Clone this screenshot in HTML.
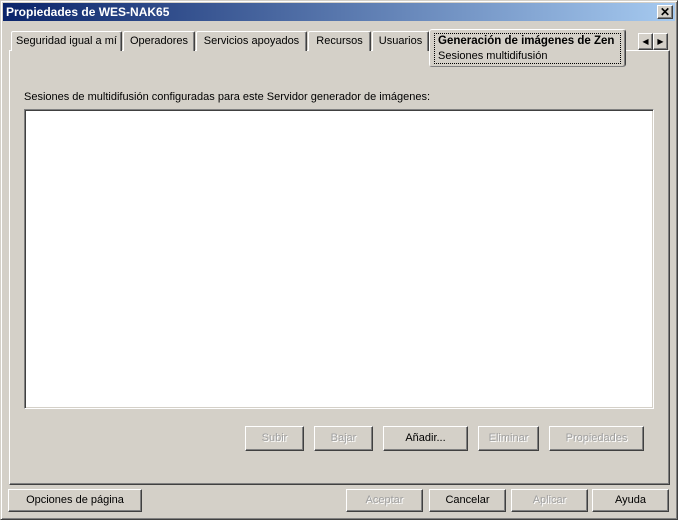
<!DOCTYPE html>
<html><head><meta charset="utf-8"><style>
*{margin:0;padding:0;box-sizing:border-box}
body{width:678px;height:520px;background:#d4d0c8;font-family:"Liberation Sans",sans-serif;font-size:11px;color:#000;position:relative;overflow:hidden}
.a{position:absolute}
.win{left:0;top:0;width:678px;height:520px;border:1px solid;border-color:#d4d0c8 #404040 #404040 #d4d0c8;box-shadow:inset 1px 1px #fff,inset -1px -1px #808080}
.title{left:3px;top:3px;width:672px;height:18px;background:linear-gradient(90deg,#0a246a,#a6caf0);color:#fff;font-weight:bold;font-size:12px;line-height:18px;padding-left:3px}
.btn{position:absolute;background:#d4d0c8;border:1px solid;border-color:#fff #404040 #404040 #fff;box-shadow:inset -1px -1px #808080;text-align:center;line-height:20px}
.dis{color:#a0a0a0;text-shadow:1px 1px #fff}
.tab{position:absolute;top:31px;height:20px;border:1px solid;border-bottom:none;border-color:#fff #404040 #404040 #fff;box-shadow:inset -1px 0 #808080;border-radius:2px 2px 0 0;line-height:18px;text-align:center;background:#d4d0c8}
</style></head><body>
<div class="a win"></div>
<div class="a title">Propiedades de WES-NAK65</div>
<div class="btn" style="left:657px;top:5px;width:16px;height:14px;line-height:12px;font-weight:bold;font-size:12px">✕</div>
<div class="a" style="left:9px;top:50px;width:661px;height:435px;border:1px solid;border-color:#fff #404040 #404040 #fff;box-shadow:inset -1px -1px #808080"></div>
<div class="tab" style="left:11px;width:111px">Seguridad igual a mí</div>
<div class="tab" style="left:123px;width:72px">Operadores</div>
<div class="tab" style="left:196px;width:111px">Servicios apoyados</div>
<div class="tab" style="left:308px;width:63px">Recursos</div>
<div class="tab" style="left:372px;width:57px">Usuarios</div>
<div class="tab" style="left:429px;top:29px;width:197px;height:38px;border-bottom:1px solid #808080;border-radius:3px;text-align:left">
<div class="a" style="left:4px;top:3px;width:187px;height:31px;border:1px dotted #000"></div>
<div class="a" style="left:8px;top:2px;font-weight:bold;font-size:11.5px;white-space:nowrap">Generación de imágenes de Zen</div>
<div class="a" style="left:8px;top:17px">Sesiones multidifusión</div>
</div>
<div class="btn" style="left:638px;top:33px;width:15px;height:17px;line-height:15px;font-size:8px">◀</div>
<div class="btn" style="left:653px;top:33px;width:15px;height:17px;line-height:15px;font-size:8px">▶</div>
<div class="a" style="left:24px;top:91px">Sesiones de multidifusión configuradas para este Servidor generador de imágenes:</div>
<div class="a" style="left:24px;top:109px;width:630px;height:300px;background:#fff;border:1px solid;border-color:#808080 #fff #fff #808080;box-shadow:inset 1px 1px #404040,inset -1px -1px #d4d0c8"></div>
<div class="btn dis" style="left:245px;top:426px;width:59px;height:25px;line-height:23px">Subir</div>
<div class="btn dis" style="left:314px;top:426px;width:59px;height:25px;line-height:23px">Bajar</div>
<div class="btn" style="left:383px;top:426px;width:85px;height:25px;line-height:23px">Añadir...</div>
<div class="btn dis" style="left:478px;top:426px;width:61px;height:25px;line-height:23px">Eliminar</div>
<div class="btn dis" style="left:549px;top:426px;width:95px;height:25px;line-height:23px">Propiedades</div>
<div class="btn" style="left:8px;top:489px;width:134px;height:23px">Opciones de página</div>
<div class="btn dis" style="left:346px;top:489px;width:77px;height:23px">Aceptar</div>
<div class="btn" style="left:429px;top:489px;width:77px;height:23px">Cancelar</div>
<div class="btn dis" style="left:511px;top:489px;width:77px;height:23px">Aplicar</div>
<div class="btn" style="left:592px;top:489px;width:77px;height:23px">Ayuda</div>
</body></html>
